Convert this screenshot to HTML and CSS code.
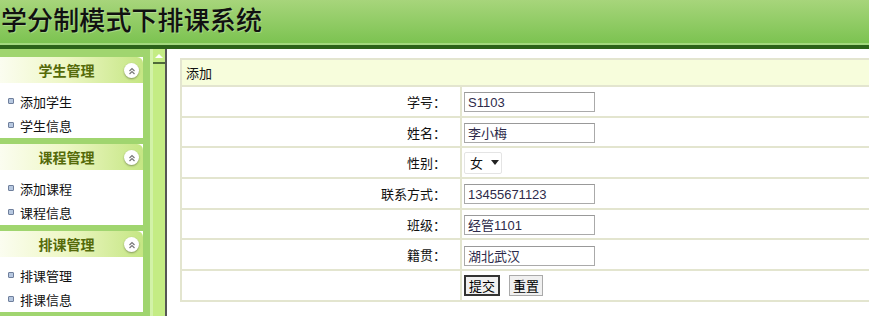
FILE: index.html
```html
<!DOCTYPE html>
<html lang="zh">
<head>
<meta charset="utf-8">
<title>学分制模式下排课系统</title>
<link rel="stylesheet" href="styles.css">
</head>
<body>
<header class="top">
  <h1 class="title">学分制模式下排课系统</h1>
</header>
<div class="top-line"></div>
<div class="layout">
  <aside class="sidebar">
    <section class="panel">
      <div class="panel-head"><span class="panel-title">学生管理</span><span class="collapse"><svg width="10" height="10" viewBox="0 0 10 10"><path d="M2.5 5 L5 2.5 L7.5 5 M2.5 8 L5 5.5 L7.5 8" fill="none" stroke="#777" stroke-width="1.2"/></svg></span></div>
      <ul class="panel-body">
        <li><span class="dot"></span>添加学生</li>
        <li><span class="dot"></span>学生信息</li>
      </ul>
    </section>
    <section class="panel">
      <div class="panel-head"><span class="panel-title">课程管理</span><span class="collapse"><svg width="10" height="10" viewBox="0 0 10 10"><path d="M2.5 5 L5 2.5 L7.5 5 M2.5 8 L5 5.5 L7.5 8" fill="none" stroke="#777" stroke-width="1.2"/></svg></span></div>
      <ul class="panel-body">
        <li><span class="dot"></span>添加课程</li>
        <li><span class="dot"></span>课程信息</li>
      </ul>
    </section>
    <section class="panel">
      <div class="panel-head"><span class="panel-title">排课管理</span><span class="collapse"><svg width="10" height="10" viewBox="0 0 10 10"><path d="M2.5 5 L5 2.5 L7.5 5 M2.5 8 L5 5.5 L7.5 8" fill="none" stroke="#777" stroke-width="1.2"/></svg></span></div>
      <ul class="panel-body">
        <li><span class="dot"></span>排课管理</li>
        <li><span class="dot"></span>排课信息</li>
      </ul>
    </section>
  </aside>
  <div class="scroll">
    <div class="scroll-up"><svg width="10" height="6" viewBox="0 0 10 6"><path d="M1 5 L5 1 L9 5 Z" fill="#fff"/></svg></div>
    <div class="scroll-track"></div>
  </div>
  <main class="main">
    <table class="form">
      <tr class="head-row"><th colspan="2" class="form-head">添加</th></tr>
      <tr><td class="lbl">学号：</td><td class="val"><input class="txt" type="text" value="S1103"></td></tr>
      <tr><td class="lbl">姓名：</td><td class="val"><input class="txt" type="text" value="李小梅"></td></tr>
      <tr><td class="lbl">性别：</td><td class="val"><span class="select">女<svg width="8" height="5" viewBox="0 0 8 5"><path d="M0 0 L8 0 L4 5 Z" fill="#222"/></svg></span></td></tr>
      <tr><td class="lbl">联系方式：</td><td class="val"><input class="txt" type="text" value="13455671123"></td></tr>
      <tr><td class="lbl">班级：</td><td class="val"><input class="txt" type="text" value="经管1101"></td></tr>
      <tr><td class="lbl">籍贯：</td><td class="val"><input class="txt" type="text" value="湖北武汉"></td></tr>
      <tr><td class="lbl"></td><td class="val"><button class="btn btn-primary">提交</button><button class="btn">重置</button></td></tr>
    </table>
  </main>
</div>
</body>
</html>
```
FILE: styles.css
```css
* { box-sizing: border-box; }
html, body { margin: 0; padding: 0; }
body {
  width: 869px;
  height: 316px;
  overflow: hidden;
  font-family: "Noto Sans CJK SC", "Liberation Sans", sans-serif;
  font-size: 13px;
  color: #111;
  background: #fff;
}
.top {
  height: 43px;
  background: linear-gradient(#a7d57b, #7cc351);
  display: flex;
  align-items: center;
  padding-bottom: 5px;
}
.title {
  margin: 0 0 0 1px;
  font-size: 26px;
  font-weight: 500;
  letter-spacing: 0.1px;
  color: #111;
  text-shadow: 1px 1px 0 rgba(255,255,255,0.25);
  line-height: 1;
}
.top-line {
  height: 6px;
  border-top: 2px solid #a2d87e;
  background: #2b6319;
}
.layout {
  display: flex;
  height: 267px;
}
.sidebar {
  width: 153px;
  background: #a0d56f;
  padding: 8px 7px 0 0;
  display: flex;
  flex-direction: column;
  gap: 6px;
  border-right: 3px solid #d2f2a8;
}
.panel {
  background: #fff;
  flex: none;
}
.panel-head {
  height: 26px;
  border-top-right-radius: 6px;
  background: linear-gradient(90deg, #fbfdf0 0%, #eef7c6 45%, #c5e683 100%);
  display: flex;
  align-items: center;
  justify-content: center;
  position: relative;
}
.panel-title {
  font-weight: 700;
  font-size: 14px;
  color: #556a0a;
  padding-right: 10px;
}
.collapse {
  position: absolute;
  right: 4px;
  top: 6px;
  width: 15px;
  height: 15px;
  border-radius: 50%;
  background: #fff;
  box-shadow: 0 1px 2px rgba(0,0,0,0.35);
  display: flex;
  align-items: center;
  justify-content: center;
}
.panel-body {
  list-style: none;
  margin: 0;
  padding: 6px 0 1px 0;
}
.panel-body li {
  height: 24px;
  display: flex;
  align-items: center;
  padding-left: 8px;
  font-size: 13px;
}
.dot {
  width: 6px;
  height: 6px;
  border-radius: 1px;
  border: 1px solid #6f7f9c;
  background: #b7c8e0;
  margin-right: 6px;
}
.scroll {
  width: 14px;
  background: #c4ec84;
  border-right: 2px solid #555;
  display: flex;
  flex-direction: column;
}
.scroll-up {
  height: 15px;
  display: flex;
  align-items: center;
  justify-content: center;
  border-bottom: 2px solid #4f6a3a;
}
.scroll-track { flex: 1; }
.main {
  flex: 1;
  padding: 9px 0 0 13px;
  overflow: hidden;
}
.form {
  border-collapse: collapse;
  width: 720px;
  border: 2px solid #e3e5cf;
}
.form td, .form th {
  border: 2px solid #e3e5cf;
  padding: 0;
}
.form tr { height: 30.7px; }
.form tr.head-row { height: 27px; }
.form-head {
  background: #f7fddc;
  text-align: left;
  font-weight: 400;
  padding-left: 4px !important;
  font-size: 13px;
}
.lbl {
  width: 280px;
  text-align: right;
  padding-right: 14px !important;
}
.val { padding-left: 2px !important; }
.txt {
  width: 131px;
  height: 20px;
  border: 1px solid #aaa;
  border-top-color: #999;
  padding: 0 3px;
  font-family: "Liberation Sans", "Noto Sans CJK SC", sans-serif;
  font-size: 13px;
  color: #2d2a4a;
  vertical-align: middle;
}
.select {
  display: inline-flex;
  align-items: center;
  gap: 8px;
  height: 22px;
  width: 38px;
  padding-left: 5px;
  border: 1px solid #e4e4e4;
  border-radius: 2px;
  vertical-align: middle;
}
.btn {
  font-family: "Noto Sans CJK SC", sans-serif;
  font-size: 13px;
  height: 21px;
  padding: 0 3px;
  background: #f0f0f0;
  border: 1px solid #aaa;
  margin-right: 9px;
  vertical-align: middle;
  line-height: 1;
}
.btn-primary { border: 2px solid #333; }
```
